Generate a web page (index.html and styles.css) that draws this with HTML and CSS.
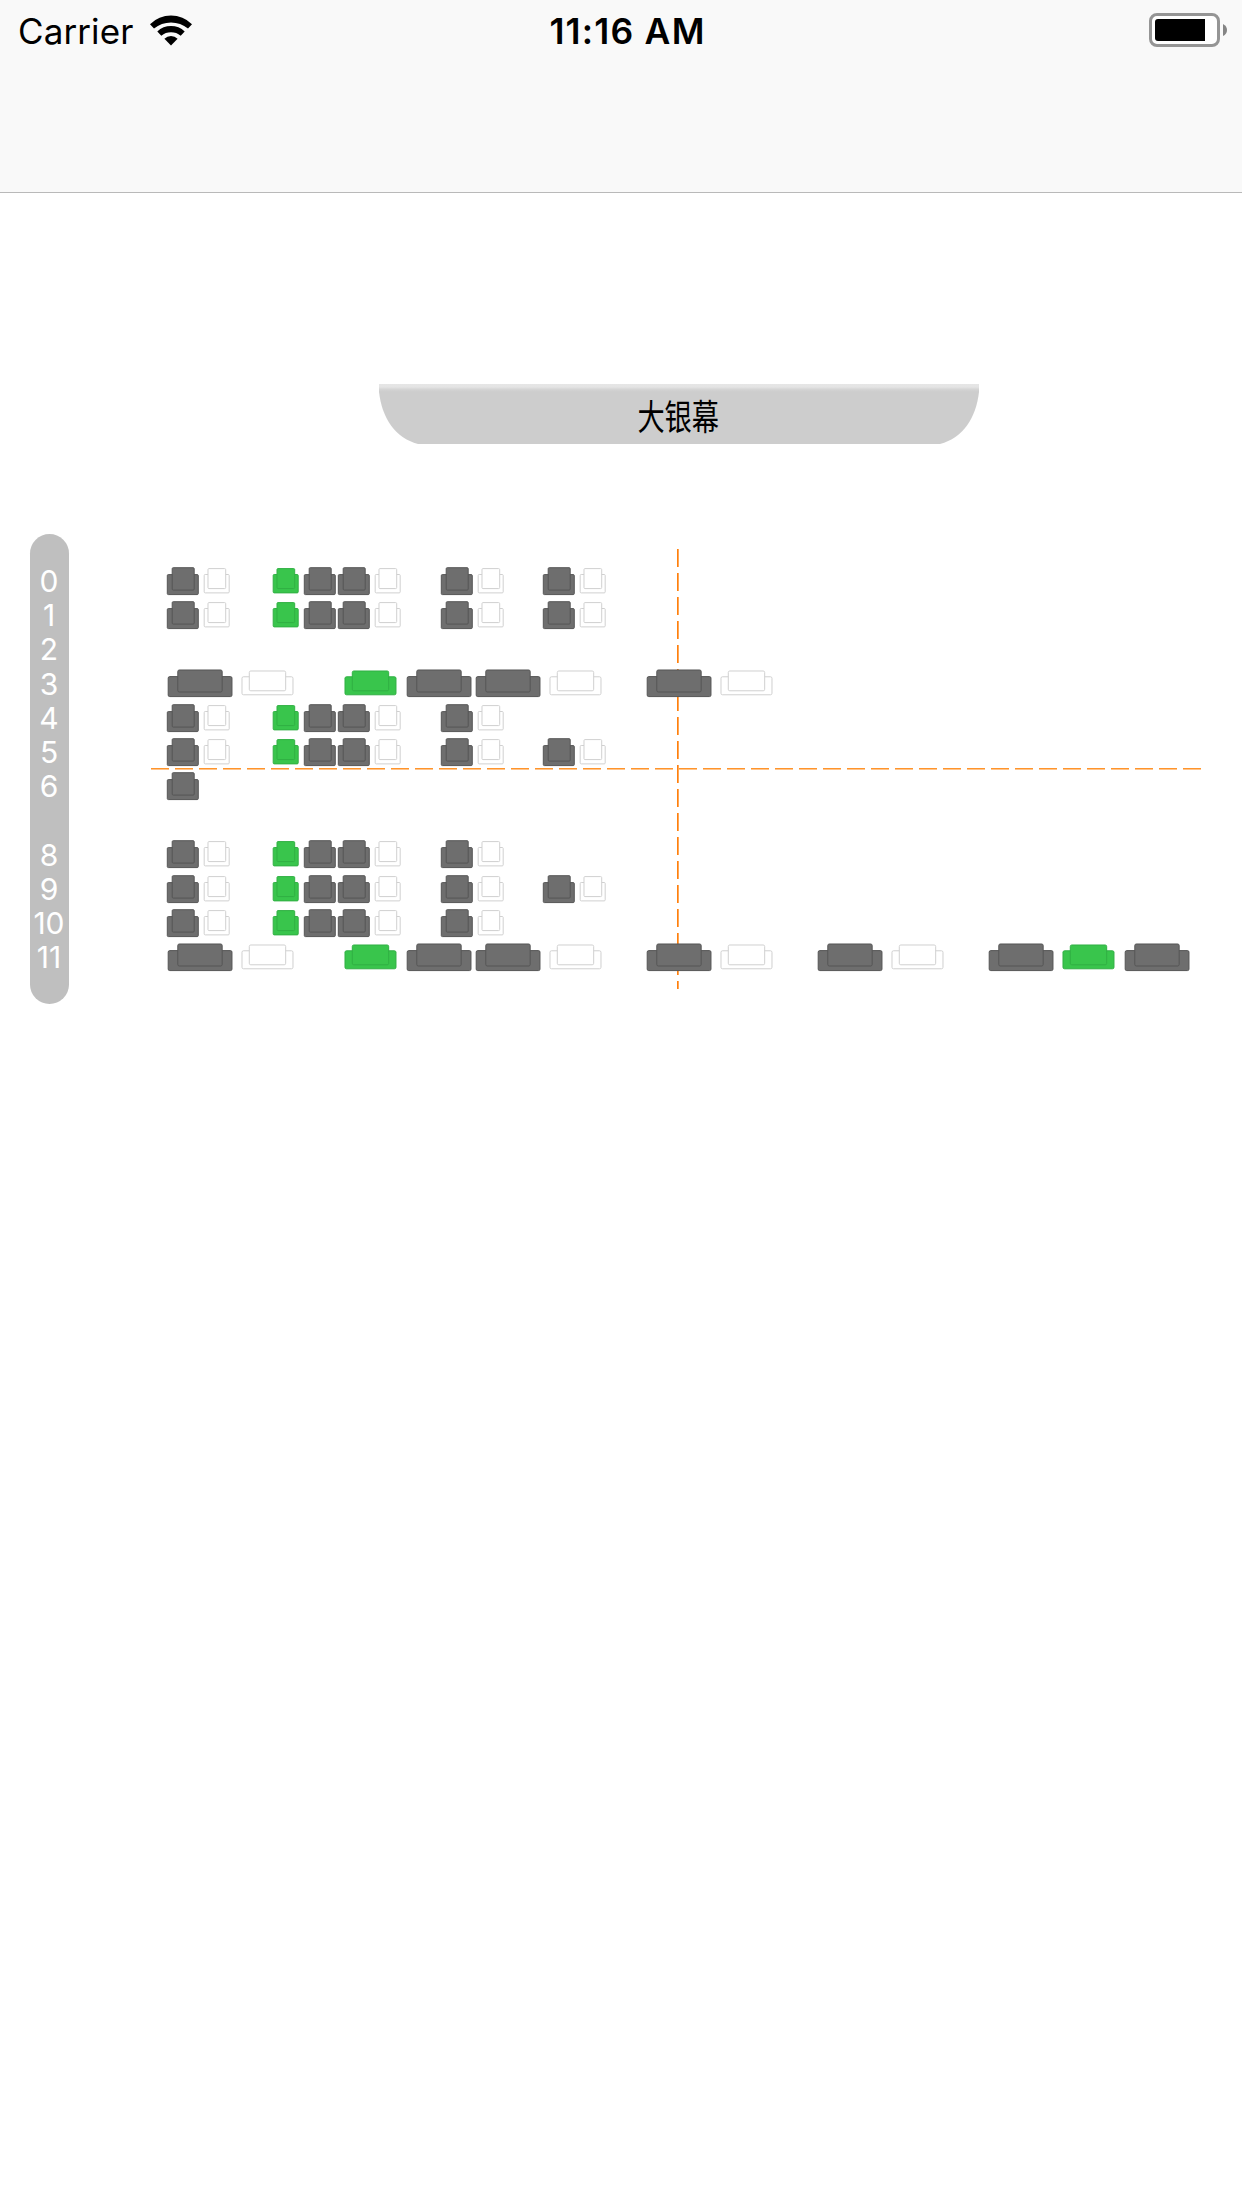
FILE: index.html
```html
<!DOCTYPE html>
<html lang="zh-CN">
<head>
<meta charset="utf-8">
<title>选座</title>
<link rel="stylesheet" href="styles.css">
</head>
<body>
<svg class="defs" width="0" height="0" aria-hidden="true">
  <symbol id="seat-sold" viewBox="0 0 34.2 34.2"><rect x="1.3" y="10.6" width="31" height="20" rx="1"/><rect x="6.2" y="3.7" width="22" height="22.4" rx="1"/></symbol>
  <symbol id="seat-open" viewBox="0 0 34.2 34.2"><rect x="4.2" y="10.5" width="25" height="18.4" rx="1"/><rect x="8" y="4.6" width="17.7" height="20" rx="1"/></symbol>
  <symbol id="sofa-sold" viewBox="0 0 68.4 34.2"><rect x="2.2" y="10.6" width="63.8" height="20" rx="1.5"/><rect x="11.8" y="4" width="44.4" height="22" rx="1.5"/></symbol>
  <symbol id="sofa-open" viewBox="0 0 68.4 34.2"><rect x="8" y="10.8" width="51" height="18" rx="1.5"/><rect x="15.3" y="5" width="36.4" height="19.8" rx="1.5"/></symbol>
</svg>

<header class="navbar">
  <div class="status">
    <div class="carrier">
      <span class="carrier-name">Carrier</span>
      <svg class="wifi" width="42" height="31" viewBox="0 0 42 31">
        <path d="M0 9.2A30 30 0 0 1 42 9.2L38 13.4A27 27 0 0 0 4 13.4Z"/>
        <path d="M7.3 16.5A19.5 19.5 0 0 1 34.7 16.5L30.7 20.7A15.5 15.5 0 0 0 11.3 20.7Z"/>
        <path d="M14.4 23.7A9.5 9.5 0 0 1 27.6 23.7L21 30.4Z"/>
      </svg>
    </div>
    <div class="time">11:16 AM</div>
    <svg class="battery" width="80" height="34" viewBox="0 0 80 34">
      <rect class="battery-shell" x="2.5" y="1.5" width="68" height="31" rx="6.5"/>
      <path d="M7 9a3 3 0 0 1 3-3H57V28H10a3 3 0 0 1-3-3Z"/>
      <path class="battery-cap" d="M75 11Q79 13 79 17T75 23Z"/>
    </svg>
  </div>
</header>

<main class="hall">
  <div class="screen">
    <svg class="screen-shape" width="600" height="60" viewBox="0 0 600 60">
      <defs>
        <linearGradient id="lip" x1="0" y1="0" x2="0" y2="1">
          <stop offset="0" stop-color="#e6e6e6"/><stop offset=".05" stop-color="#e4e4e4"/><stop offset=".09" stop-color="#d4d4d4"/><stop offset=".13" stop-color="#cdcdcd"/>
        </linearGradient>
      </defs>
      <path fill="url(#lip)" d="M0 0H600V8C597 34 584 54 561 60H39C16 54 3 34 0 8Z"/>
    </svg>
    <span class="screen-name">大银幕</span>
  </div>

  <div class="plan">
    <ol class="rows">
      <li>0</li><li>1</li><li>2</li><li>3</li><li>4</li><li>5</li><li>6</li><li></li><li>8</li><li>9</li><li>10</li><li>11</li>
    </ol>
    <div class="seats" id="seats">
      <div class="axis axis-x"></div>
      <div class="axis axis-y"></div>
    </div>
  </div>
</main>
<script src="seats.js"></script>
</body>
</html>
```
FILE: styles.css
```css
* { box-sizing: border-box; }
body {
  margin: 0;
  background: #fff;
  color: #000;
  font-family: Inter, "Noto Sans CJK SC", sans-serif;
}
.defs { position: absolute; }

.navbar {
  height: 193px;
  background: #f9f9f9;
  border-bottom: 1px solid #b9b9b9;
}
.status {
  display: grid;
  grid-template-columns: 1fr auto 1fr;
  align-items: center;
  height: 60px;
  padding: 2px 14px 0 18px;
}
.carrier { display: flex; align-items: center; gap: 17px; }
.carrier-name { font-size: 35px; line-height: 40px; letter-spacing: .1px; }
.wifi { margin-top: -2px; }
.time {
  padding: 2px 0 0 9px;
  font-size: 35.5px;
  font-weight: 580;
  line-height: 40px;
  letter-spacing: 1.2px;
}
.battery { justify-self: end; margin-top: -2px; }
.battery-shell { fill: #fff; stroke: #959595; stroke-width: 3; }
.battery-cap { fill: #858585; }

.screen {
  display: grid;
  place-items: center;
  width: 600px;
  height: 60px;
  margin: 191px 0 0 379px;
}
.screen > * { grid-area: 1 / 1; }
.screen-name {
  padding-right: 2px;
  font-family: "Noto Sans CJK SC", sans-serif;
  font-size: 34px;
  line-height: 59px;
  transform: scale(.8, 1.04);
}

.plan {
  display: flex;
  align-items: center;
  gap: 97px;
  margin: 90px 0 0 30px;
}
.rows {
  display: grid;
  grid-template-rows: repeat(12, 34.2px);
  width: 39px;
  height: 470px;
  margin: 0;
  padding: 30px 0;
  list-style: none;
  border-radius: 20px;
  background: #bfbfbf;
  color: #fff;
  font-size: 30px;
  font-weight: 400;
  line-height: 35.4px;
  text-align: center;
}
.rows li { display: flex; justify-content: center; padding-right: 1px; }
.seats {
  position: relative;
  display: grid;
  grid-template-columns: repeat(30, 34.2px);
  grid-template-rows: repeat(12, 34.2px);
}
.seat { position: relative; display: block; width: 100%; height: 34.2px; stroke-width: 1; }
.sold { fill: #6e6e6e; stroke: #555; }
.open { fill: #fff; stroke: #d0d0d0; }
.picked { fill: #39c54c; stroke: #30b043; }

.axis { position: absolute; }
.axis-x {
  left: -15px;
  right: -10px;
  top: 204px;
  height: 2px;
  background:
    linear-gradient(180deg, transparent 50%, rgba(255, 255, 255, .45) 50%),
    repeating-linear-gradient(90deg, #ff942b 0 18px, transparent 18px 24px);
}
.axis-y {
  top: -15px;
  bottom: -15px;
  left: 511px;
  width: 2px;
  background:
    linear-gradient(90deg, transparent 50%, rgba(255, 255, 255, .3) 50%),
    repeating-linear-gradient(180deg, #ff800d 0 18px, transparent 18px 24px);
}
```
FILE: seats.js
```js
// One entry per row: [column, state]; sofas take two columns.
const short = [[0, 'sold'], [1, 'open'], [3, 'picked'], [4, 'sold'], [5, 'sold'], [6, 'open'], [8, 'sold'], [9, 'open']];
const long = [...short, [11, 'sold'], [12, 'open']];
const sofas = [[0, 'sold'], [2, 'open'], [5, 'picked'], [7, 'sold'], [9, 'sold'], [11, 'open'], [14, 'sold'], [16, 'open']];
const back = [...sofas, [19, 'sold'], [21, 'open'], [24, 'sold'], [26, 'picked'], [28, 'sold']];
const rows = { 0: long, 1: long, 3: sofas, 4: short, 5: long, 6: [[0, 'sold']], 8: short, 9: long, 10: short, 11: back };

let html = '';
for (const [row, list] of Object.entries(rows)) {
  const wide = list === sofas || list === back;
  for (const [col, state] of list) {
    const shape = (wide ? 'sofa-' : 'seat-') + (state === 'sold' ? 'sold' : 'open');
    html += `<svg class="seat ${state}" style="grid-area:${+row + 1}/${col + 1}/auto/span ${wide ? 2 : 1}"><use href="#${shape}"/></svg>`;
  }
}
document.getElementById('seats').insertAdjacentHTML('beforeend', html);
```
